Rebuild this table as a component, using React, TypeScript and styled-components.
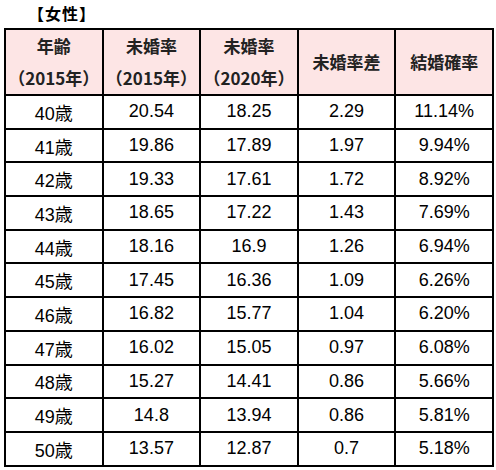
import React from 'react';
import styled, { createGlobalStyle } from 'styled-components';

const GlobalStyle = createGlobalStyle`
  html, body {
    margin: 0;
    padding: 0;
    background: #fff;
  }
  body {
    font-family: "Liberation Sans", "Noto Sans CJK JP", sans-serif;
    color: #000;
  }
`;

const Page = styled.div`
  padding: 3px 0 0 4px;
`;

const Title = styled.div`
  font-family: "Noto Sans CJK JP", sans-serif;
  font-weight: bold;
  font-size: 16px;
  line-height: 20px;
  height: 25px;
  padding-left: 24px;
  letter-spacing: 1px;
`;

const Table = styled.table`
  border-collapse: collapse;
  table-layout: fixed;
  width: 490px;
`;

const HeadCell = styled.th`
  background: #fde5e5;
  border: 2px solid #000;
  height: 64px;
  padding: 0;
  font-family: "Noto Sans CJK JP", sans-serif;
  font-weight: bold;
  font-size: 17px;
  color: #222;
  text-align: center;
  vertical-align: middle;
`;

const HeadLine = styled.div`
  line-height: 32px;
`;

const Row = styled.tr`
  height: 33.7px;
`;

const Cell = styled.td`
  border: 2px solid #000;
  padding: 0;
  font-size: 18px;
  text-align: center;
  vertical-align: middle;
`;

const rows = [
  ['40歳', '20.54', '18.25', '2.29', '11.14%'],
  ['41歳', '19.86', '17.89', '1.97', '9.94%'],
  ['42歳', '19.33', '17.61', '1.72', '8.92%'],
  ['43歳', '18.65', '17.22', '1.43', '7.69%'],
  ['44歳', '18.16', '16.9', '1.26', '6.94%'],
  ['45歳', '17.45', '16.36', '1.09', '6.26%'],
  ['46歳', '16.82', '15.77', '1.04', '6.20%'],
  ['47歳', '16.02', '15.05', '0.97', '6.08%'],
  ['48歳', '15.27', '14.41', '0.86', '5.66%'],
  ['49歳', '14.8', '13.94', '0.86', '5.81%'],
  ['50歳', '13.57', '12.87', '0.7', '5.18%'],
];

const headers = [
  ['年齢', '（2015年）'],
  ['未婚率', '（2015年）'],
  ['未婚率', '（2020年）'],
  ['未婚率差'],
  ['結婚確率'],
];

const App: React.FC = () => (
  <Page>
    <GlobalStyle />
    <Title>【女性】</Title>
    <Table>
      <thead>
        <tr>
          {headers.map((lines, i) => (
            <HeadCell key={i}>
              {lines.map((l) => (
                <HeadLine key={l}>{l}</HeadLine>
              ))}
            </HeadCell>
          ))}
        </tr>
      </thead>
      <tbody>
        {rows.map((r) => (
          <Row key={r[0]}>
            {r.map((v, j) => (
              <Cell key={j}>{v}</Cell>
            ))}
          </Row>
        ))}
      </tbody>
    </Table>
  </Page>
);

export default App;
